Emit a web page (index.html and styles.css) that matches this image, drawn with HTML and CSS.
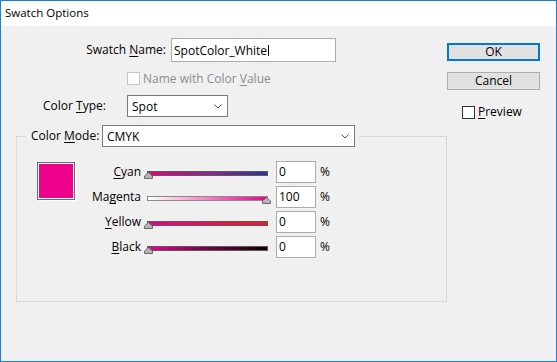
FILE: index.html
```html
<!DOCTYPE html>
<html>
<head>
<meta charset="utf-8">
<link rel="stylesheet" href="styles.css">
</head>
<body>
<div class="window">
  <div class="titlebar">Swatch Options</div>
  <div class="content">
    <div class="form">
      <div class="row row-name">
        <span class="lbl lbl-name">Swatch <u>N</u>ame:</span>
        <div class="textbox name-box"><span>SpotColor_White</span><span class="caret"></span></div>
      </div>
      <div class="row row-check">
        <span class="checkbox checkbox-disabled"></span>
        <span class="check-text text-disabled">Name with Color <u>V</u>alue</span>
      </div>
      <div class="row row-type">
        <span class="lbl lbl-type">Color <u>T</u>ype:</span>
        <div class="dropdown type-dd"><span>Spot</span><svg class="chev" width="8" height="5" viewBox="0 0 8 5"><polyline points="0.5,0.5 4,4 7.5,0.5" fill="none" stroke="#505050" stroke-width="1"/></svg></div>
      </div>
      <fieldset class="group">
        <legend class="group-legend">
          <div class="legend-inner">
            <span class="lbl lbl-mode">Color <u>M</u>ode:</span>
            <div class="dropdown mode-dd"><span>CMYK</span><svg class="chev" width="8" height="5" viewBox="0 0 8 5"><polyline points="0.5,0.5 4,4 7.5,0.5" fill="none" stroke="#505050" stroke-width="1"/></svg></div>
          </div>
        </legend>
        <div class="group-body">
          <div class="swatch"></div>
          <div class="channels">
            <span class="ch-label"><u>C</u>yan</span>
            <div class="slider">
              <div class="track track-cyan"></div>
              <svg class="thumb" style="left:0px" width="9" height="7" viewBox="0 0 9 7"><path d="M0.5 6.5 V4 L4.5 0.5 L8.5 4 V6.5 Z" fill="#b4b4b4" stroke="#6a6a6a" stroke-width="1"/></svg>
            </div>
            <div class="num">0</div>
            <span class="pct">%</span>

            <span class="ch-label">Ma<u>g</u>enta</span>
            <div class="slider">
              <div class="track track-magenta"></div>
              <svg class="thumb" style="left:118px" width="9" height="7" viewBox="0 0 9 7"><path d="M0.5 6.5 V4 L4.5 0.5 L8.5 4 V6.5 Z" fill="#b4b4b4" stroke="#6a6a6a" stroke-width="1"/></svg>
            </div>
            <div class="num">100</div>
            <span class="pct">%</span>

            <span class="ch-label"><u>Y</u>ellow</span>
            <div class="slider">
              <div class="track track-yellow"></div>
              <svg class="thumb" style="left:0px" width="9" height="7" viewBox="0 0 9 7"><path d="M0.5 6.5 V4 L4.5 0.5 L8.5 4 V6.5 Z" fill="#b4b4b4" stroke="#6a6a6a" stroke-width="1"/></svg>
            </div>
            <div class="num">0</div>
            <span class="pct">%</span>

            <span class="ch-label"><u>B</u>lack</span>
            <div class="slider">
              <div class="track track-black"></div>
              <svg class="thumb" style="left:0px" width="9" height="7" viewBox="0 0 9 7"><path d="M0.5 6.5 V4 L4.5 0.5 L8.5 4 V6.5 Z" fill="#b4b4b4" stroke="#6a6a6a" stroke-width="1"/></svg>
            </div>
            <div class="num">0</div>
            <span class="pct">%</span>
          </div>
        </div>
      </fieldset>
    </div>
    <div class="side">
      <div class="btn btn-default">OK</div>
      <div class="btn btn-cancel">Cancel</div>
      <div class="preview"><span class="checkbox"></span><span class="check-text"><u>P</u>review</span></div>
    </div>
  </div>
</div>
</body>
</html>
```

FILE: styles.css
```css
* { box-sizing: border-box; }
html, body { margin: 0; padding: 0; }
body {
  font-family: "Open Sans", "Noto Sans", sans-serif;
  font-size: 12px;
  color: #000;
  background: #f0f0f0;
}
u { text-decoration: underline; text-underline-offset: 2px; text-decoration-skip-ink: none; }

.window {
  width: 557px;
  height: 362px;
  border: 1px solid #1a7fd4;
  background: #f0f0f0;
  display: flex;
  flex-direction: column;
}
.titlebar {
  height: 25px;
  flex: none;
  background: #fff;
  padding-left: 4px;
  line-height: 23px;
  font-size: 11.5px;
}
.content { flex: 1; display: flex; }
.form { flex: 1; }
.side { width: 93px; margin-right: 16px; padding-top: 17px; }

.row { display: flex; align-items: center; }
.lbl { white-space: nowrap; line-height: 16px; }

.row-name { margin-top: 12px; }
.lbl-name { width: 165px; text-align: right; margin-right: 5px; }
.textbox {
  background: #fff;
  border: 1px solid #acacac;
  display: flex;
  align-items: center;
  padding-left: 2px;
}
.name-box { width: 165px; height: 24px; }
.caret { width: 1px; height: 11px; background: #000; margin-left: 1px; }

.row-check { margin-top: 10px; padding-left: 126px; height: 13px; }
.checkbox {
  width: 13px;
  height: 13px;
  border: 1px solid #333;
  background: #fff;
  flex: none;
}
.checkbox-disabled { border-color: #c6c6c6; background: #fcfcfc; }
.check-text { margin-left: 3px; line-height: 16px; white-space: nowrap; }
.text-disabled { color: #8d8d8d; }

.row-type { margin-top: 10px; padding-left: 42px; }
.lbl-type { width: 84px; }
.dropdown {
  background: #fff;
  border: 1px solid #7a7a7a;
  display: flex;
  align-items: center;
  justify-content: space-between;
  padding: 0 5px 0 4px;
  height: 22px;
}
.type-dd { width: 101px; }
.chev { display: block; }

.group {
  margin: 8px 0 0 15px;
  width: 431px;
  height: 177px;
  border: 1px solid #d9d9d9;
  padding: 0;
  min-width: 0;
}
.group-legend { margin-left: 9px; padding: 0 4px 0 5px; }
.legend-inner { display: flex; align-items: center; }
.lbl-mode { width: 71px; }
.mode-dd { width: 253px; }

.group-body { display: flex; padding: 14px 0 0 20px; }
.swatch {
  width: 38px;
  height: 38px;
  margin-top: 1px;
  border: 1px solid #6d6d6d;
  padding: 1px;
  background: linear-gradient(#ec008c, #ec008c) content-box no-repeat, #fff;
  box-shadow: 1px 1px 0 #fff;
  flex: none;
}

.channels {
  margin-left: 5px;
  display: grid;
  grid-template-columns: 64px 132px 44px auto;
  grid-auto-rows: 22px;
  row-gap: 3px;
  align-items: center;
}
.ch-label { text-align: right; padding-right: 3px; line-height: 16px; white-space: nowrap; }
.slider { position: relative; height: 22px; width: 126px; }
.track {
  margin: 10px 0 0 3px;
  width: 121px;
  height: 5px;
  border: 1px solid #5a5a5a;
}
.track-cyan { background: linear-gradient(to right, #e6007e, #86288e 55%, #2e3192); }
.track-magenta { background: linear-gradient(to right, #ffffff, #ec008c); border-color: #8a8a8a; }
.track-yellow { background: linear-gradient(to right, #ec008c, #ed1c24); }
.track-black { background: linear-gradient(to right, #ec008c, #6a0040 55%, #120008); }
.thumb { position: absolute; top: 11px; display: block; }

.num {
  width: 40px;
  height: 22px;
  background: #fff;
  border: 1px solid #acacac;
  padding-left: 2px;
  line-height: 20px;
}
.pct { line-height: 16px; }

.btn {
  height: 18px;
  background: #e1e1e1;
  border: 1px solid #adadad;
  text-align: center;
  line-height: 15px;
}
.btn-default { border: 2px solid #0078d7; line-height: 13px; }
.btn-cancel { margin-top: 11px; }
.preview { display: flex; align-items: center; margin-top: 14px; padding-left: 15px; }
```
